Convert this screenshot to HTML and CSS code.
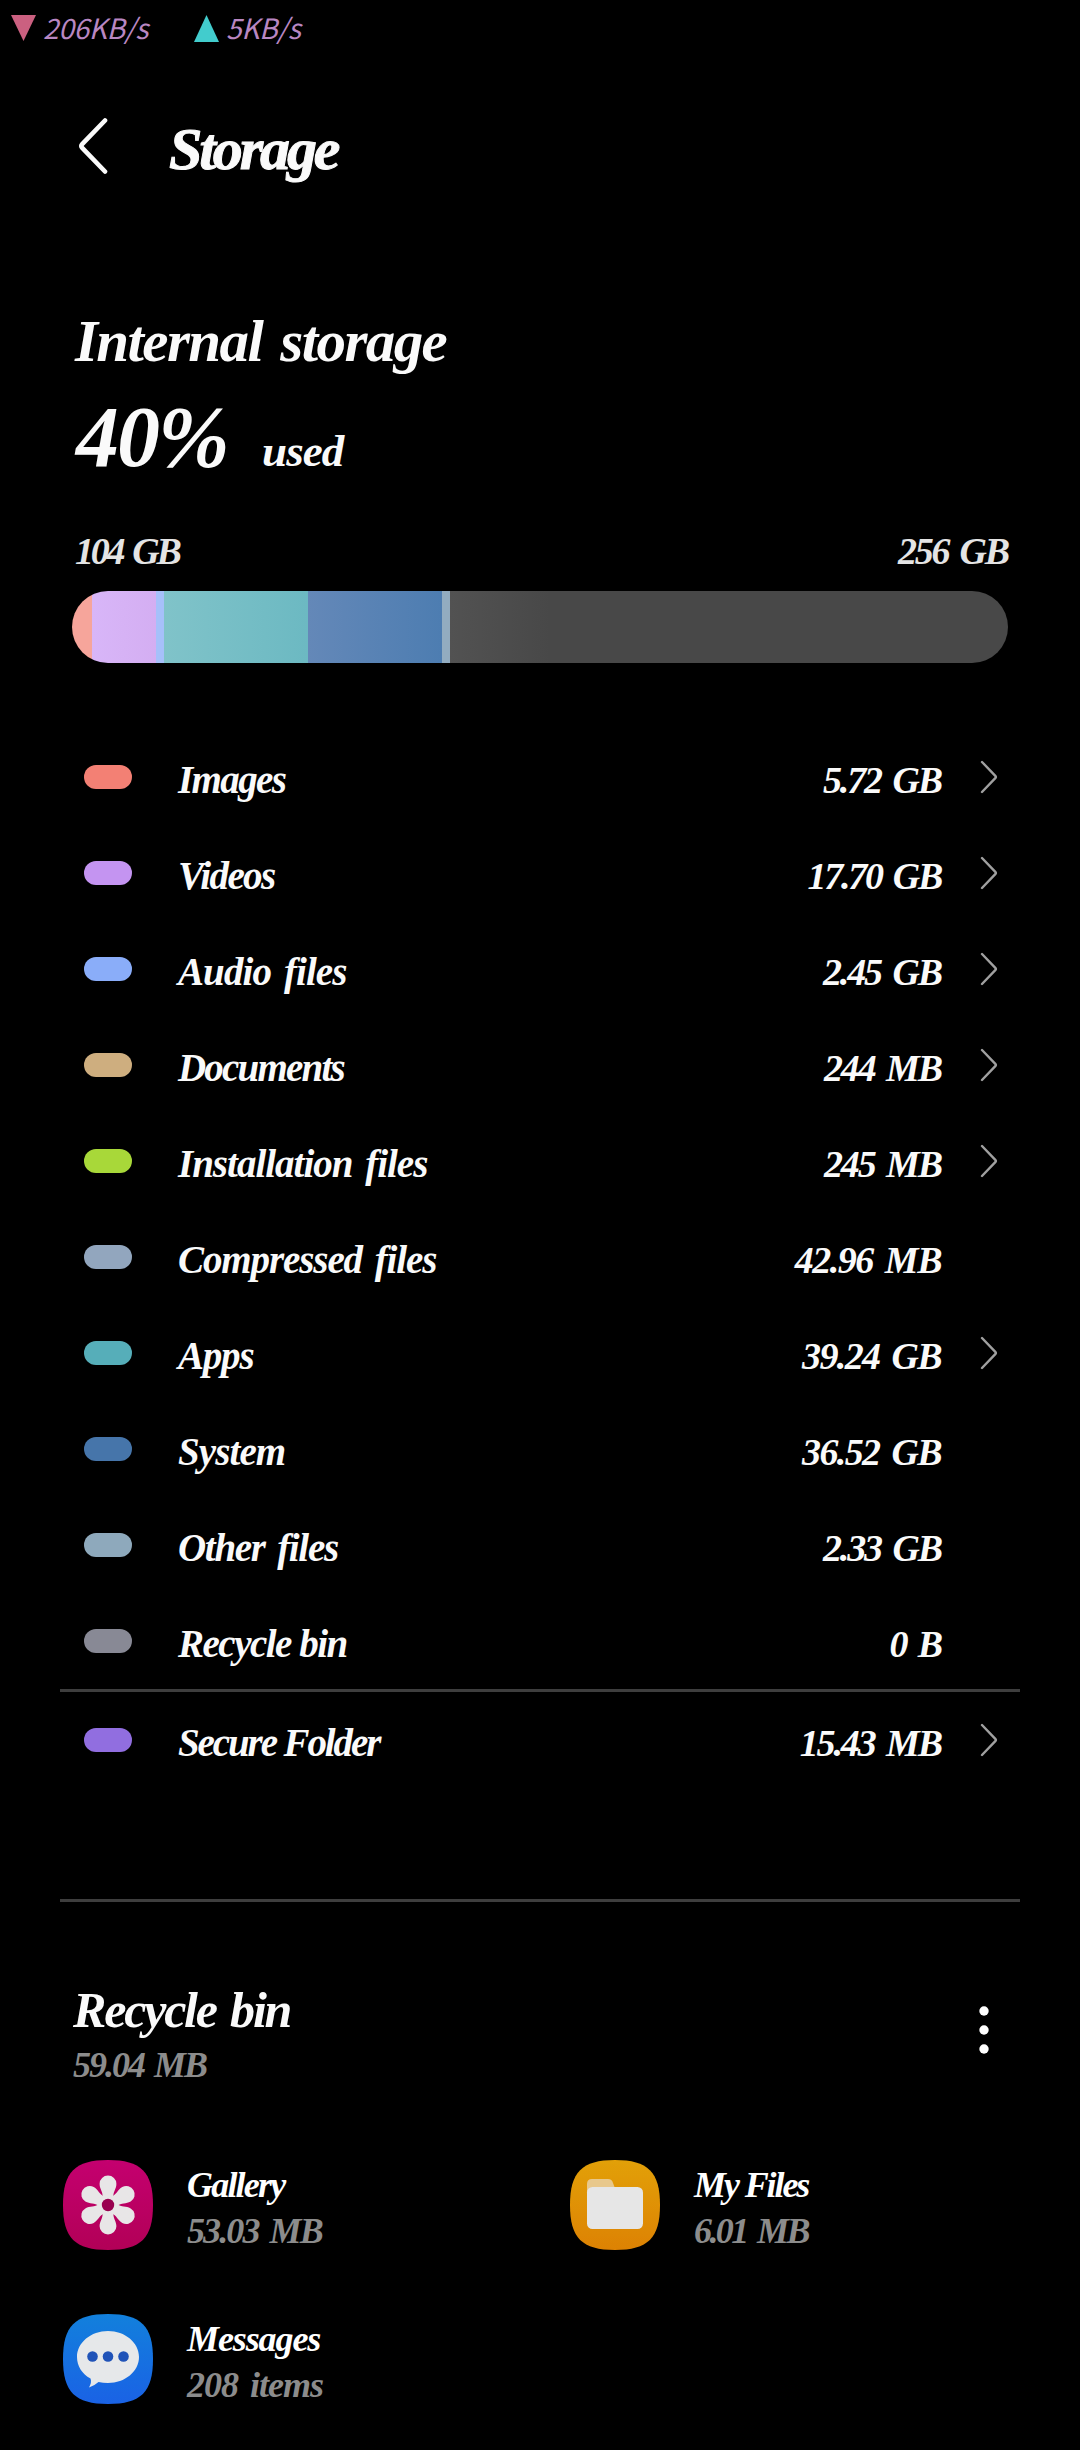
FILE: index.html
```html
<!DOCTYPE html>
<html lang="en">
<head>
<meta charset="utf-8">
<title>Storage</title>
<link rel="stylesheet" href="styles.css">
</head>
<body>
<div class="status">
  <svg class="tri" width="25" height="26" viewBox="0 0 25 26"><path d="M0 0h25L12.500 26z" fill="#cb6080"/></svg>
  <span class="speed speed--down">206KB/s</span>
  <svg class="tri" width="25" height="27" viewBox="0 0 25 27"><path d="M0 27h25L12.500 0z" fill="#42cccd"/></svg>
  <span class="speed speed--up">5KB/s</span>
</div>

<header class="header">
  <svg class="back" width="30" height="56" viewBox="0 0 30 56"><path d="M27 2.500L4.200 26.200Q2.500 28 4.200 29.800L27 53.500" fill="none" stroke="#fafafa" stroke-width="4.600" stroke-linecap="round"/></svg>
  <h1 class="title">Storage</h1>
</header>

<main>
  <section class="summary">
    <h2 class="heading">Internal storage</h2>
    <p class="usage"><span class="percent">40%</span><span class="used">used</span></p>
    <div class="scale"><span class="scale-used">104 GB</span><span class="scale-total">256 GB</span></div>
    <div class="bar">
      <i class="seg seg--images"></i><i class="seg seg--videos"></i><i class="seg seg--audio"></i><i class="seg seg--apps"></i><i class="seg seg--system"></i><i class="seg seg--other"></i><i class="seg seg--free"></i>
    </div>
  </section>

  <svg width="0" height="0" class="defs"><symbol id="chev" viewBox="0 0 18 34"><path d="M2 2L15.300 15.800Q16.400 17 15.300 18.200L2 32" fill="none" stroke="#a0a0a0" stroke-width="2.400" stroke-linecap="round"/></symbol></svg>

  <ul class="list">
    <li class="row images"><i class="pill"></i><span class="label">Images</span><span class="value">5.72 GB</span><svg class="chev"><use href="#chev"/></svg></li>
    <li class="row videos"><i class="pill"></i><span class="label">Videos</span><span class="value">17.70 GB</span><svg class="chev"><use href="#chev"/></svg></li>
    <li class="row audio"><i class="pill"></i><span class="label">Audio files</span><span class="value">2.45 GB</span><svg class="chev"><use href="#chev"/></svg></li>
    <li class="row documents"><i class="pill"></i><span class="label">Documents</span><span class="value">244 MB</span><svg class="chev"><use href="#chev"/></svg></li>
    <li class="row installation"><i class="pill"></i><span class="label">Installation files</span><span class="value">245 MB</span><svg class="chev"><use href="#chev"/></svg></li>
    <li class="row compressed"><i class="pill"></i><span class="label">Compressed files</span><span class="value">42.96 MB</span></li>
    <li class="row apps"><i class="pill"></i><span class="label">Apps</span><span class="value">39.24 GB</span><svg class="chev"><use href="#chev"/></svg></li>
    <li class="row system"><i class="pill"></i><span class="label">System</span><span class="value">36.52 GB</span></li>
    <li class="row other"><i class="pill"></i><span class="label">Other files</span><span class="value">2.33 GB</span></li>
    <li class="row recycle"><i class="pill"></i><span class="label">Recycle bin</span><span class="value">0 B</span></li>
  </ul>
  <ul class="list list--secure">
    <li class="row secure"><i class="pill"></i><span class="label">Secure Folder</span><span class="value">15.43 MB</span><svg class="chev"><use href="#chev"/></svg></li>
  </ul>

  <section class="bin">
    <div class="bin-head">
      <div>
        <h2 class="bin-title">Recycle bin</h2>
        <p class="bin-size">59.04 MB</p>
      </div>
      <svg class="more" width="12" height="50" viewBox="0 0 12 50" fill="#fff"><circle cx="6" cy="6" r="4.700"/><circle cx="6" cy="25" r="4.700"/><circle cx="6" cy="44" r="4.700"/></svg>
    </div>
    <div class="apps-grid">
      <article class="app">
        <svg width="90" height="90" viewBox="0 0 90 90">
          <defs><linearGradient id="pink" x2="0" y2="1"><stop stop-color="#c4006f"/><stop offset="1" stop-color="#b20057"/></linearGradient></defs>
          <path d="M45 0C78 0 90 12 90 45S78 90 45 90 0 78 0 45 12 0 45 0z" fill="url(#pink)"/>
          <g fill="#e8e6e7"><circle cx="45" cy="45" r="9.500"/><path id="petal" d="M39.500 38C40.500 32 36.500 29 36.600 23.700A8.400 8.200 0 0 1 53.400 23.700C53.500 29 49.500 32 50.500 38z"/><use href="#petal" transform="rotate(60 45 45)"/><use href="#petal" transform="rotate(120 45 45)"/><use href="#petal" transform="rotate(180 45 45)"/><use href="#petal" transform="rotate(240 45 45)"/><use href="#petal" transform="rotate(300 45 45)"/></g>
          <circle cx="45" cy="45" r="6.200" fill="#99004f"/>
        </svg>
        <div class="app-text"><h3 class="app-name gallery">Gallery</h3><p class="app-size">53.03 MB</p></div>
      </article>
      <article class="app">
        <svg width="90" height="90" viewBox="0 0 90 90">
          <defs><linearGradient id="amber" x2="0" y2="1"><stop stop-color="#e2a008"/><stop offset="1" stop-color="#dd8203"/></linearGradient></defs>
          <path d="M45 0C78 0 90 12 90 45S78 90 45 90 0 78 0 45 12 0 45 0z" fill="url(#amber)"/>
          <path d="M17 34V24Q17 19 22 19H38Q42 19 43 23L44.500 27 50 34z" fill="#e8c88c"/>
          <rect x="17" y="27" width="56" height="42" rx="5.500" fill="#e6e6e6"/>
        </svg>
        <div class="app-text"><h3 class="app-name files">My Files</h3><p class="app-size files-size">6.01 MB</p></div>
      </article>
      <article class="app">
        <svg width="90" height="90" viewBox="0 0 90 90">
          <defs><linearGradient id="blue" x2="0" y2="1"><stop stop-color="#1280dc"/><stop offset="1" stop-color="#1a62e5"/></linearGradient></defs>
          <path d="M45 0C78 0 90 12 90 45S78 90 45 90 0 78 0 45 12 0 45 0z" fill="url(#blue)"/>
          <path d="M45 17C62 17 76 28.500 76 43S62 69 45 69Q40 69 35.500 68Q31 72 26 73.500Q29 68 27.500 64.500C19 60 14 52 14 43C14 28.500 28 17 45 17z" fill="#e6e8ea"/>
          <g fill="#2053b8"><circle cx="29.500" cy="42.500" r="5.300"/><circle cx="45" cy="42.500" r="5.300"/><circle cx="60.500" cy="42.500" r="5.300"/></g>
        </svg>
        <div class="app-text"><h3 class="app-name messages">Messages</h3><p class="app-size messages-size">208 items</p></div>
      </article>
    </div>
  </section>
</main>
</body>
</html>
```
FILE: styles.css
```css
* { box-sizing: border-box; margin: 0; padding: 0; }
body {
  width: 1080px;
  min-height: 2450px;
  background: #000;
  color: #fafafa;
  font-family: "Liberation Serif", serif;
  font-style: italic;
  font-weight: 700;
  white-space: nowrap;
  overflow-x: hidden;
}
svg { display: block; flex: none; }
.defs { height: 0; }

.status { display: flex; align-items: center; height: 56px; padding-left: 11px; }
.speed {
  font: italic 400 28px/40px "Noto Sans CJK SC", "Noto Sans", sans-serif;
  color: #b987c2;
  padding: 0 0 2px 7px;
  letter-spacing: -0.3px;
}
.speed--down { width: 158px; }

.header { display: flex; align-items: center; height: 180px; padding-left: 78px; }
.title { margin-left: 61px; padding-top: 6px; font-size: 60px; line-height: 80px; letter-spacing: -3.1px; -webkit-text-stroke: 1px #fafafa; }

.summary { padding: 65px 72px 0; }
.heading { padding-left: 3px; font-size: 59px; line-height: 80px; letter-spacing: -1.6px; word-spacing: 5px; }
.usage { display: flex; align-items: baseline; margin-top: 6px; padding-left: 4px; line-height: 100px; height: 100px; }
.percent { width: 186px; font-size: 86px; letter-spacing: -2px; }
.used { font-size: 45px; letter-spacing: -0.9px; }
.scale { display: flex; justify-content: space-between; margin-top: 39px; padding-left: 3px; font-size: 38px; line-height: 50px; color: #e4e4e4; word-spacing: 4px; }
.scale-used { letter-spacing: -3.3px; }
.scale-total { letter-spacing: -2.2px; }

.bar { display: flex; height: 72px; margin-top: 15px; border-radius: 36px; overflow: hidden; }
.seg--images { width: 20px; background: #f6a59b; }
.seg--videos { width: 64px; background: linear-gradient(90deg, #d8b6f8, #d4aef2); }
.seg--audio { width: 8px; background: #a6c0fa; }
.seg--apps { width: 144px; background: linear-gradient(90deg, #80c3c9, #6cb9c2); }
.seg--system { width: 134px; background: linear-gradient(90deg, #6488b8, #4d7db1); }
.seg--other { width: 8px; background: #92acc0; }
.seg--free { flex: 1; background: linear-gradient(90deg, #525252, #484848 100px); }

.list { list-style: none; margin: 66px 60px 0; }
.list--secure { margin-top: 0; height: 213px; border-top: 3px solid #3e3e3e; border-bottom: 3px solid #3e3e3e; }
.row { display: grid; grid-template-columns: 94px 1fr auto 79px; align-items: center; height: 96px; padding-left: 24px; }
.pill { width: 48px; height: 24px; border-radius: 12px; }
.label, .value { padding-top: 6px; font-size: 39px; line-height: 50px; }
.value { font-size: 38px; letter-spacing: -2.1px; word-spacing: 4px; }
.chev { width: 18px; height: 34px; margin-left: 39px; }

.images .pill { background: #f38074; }
.videos .pill { background: #c494f1; }
.audio .pill { background: #8aadf9; }
.documents .pill { background: #ceae7f; }
.installation .pill { background: #a8d839; }
.compressed .pill { background: #92a6be; }
.apps .pill { background: #56aeb9; }
.system .pill { background: #4675aa; }
.other .pill { background: #8ea9bc; }
.recycle .pill { background: #888995; }
.secure .pill { background: #916ee0; }

.images .label { letter-spacing: -1.6px; }
.videos .label { letter-spacing: -1.6px; }
.audio .label { letter-spacing: -0.9px; word-spacing: 4px; }
.documents .label { letter-spacing: -1.8px; }
.installation .label { letter-spacing: -1px; word-spacing: 4px; }
.compressed .label { letter-spacing: -1.1px; word-spacing: 4px; }
.apps .label { letter-spacing: -1.2px; }
.system .label { letter-spacing: -0.9px; }
.other .label { letter-spacing: -1.3px; word-spacing: 4px; }
.recycle .label { letter-spacing: -1.5px; }
.secure .label { letter-spacing: -2.1px; }
.compressed .value { letter-spacing: -1.5px; }
.apps .value, .system .value { letter-spacing: -1.6px; }
.videos .value { letter-spacing: -2.3px; }

.bin { padding-top: 78px; }
.bin-head { display: flex; justify-content: space-between; height: 108px; padding: 0 90px 0 73px; }
.bin-title { font-size: 50px; line-height: 60px; letter-spacing: -2.2px; word-spacing: 4px; }
.bin-size { margin-top: 3px; font-size: 36px; line-height: 44px; letter-spacing: -2px; word-spacing: 3px; color: #8c8c8c; }
.more { margin-top: 25px; }

.apps-grid { display: grid; grid-template-columns: 507px 1fr; row-gap: 64px; padding: 72px 0 0 63px; }
.app { display: flex; height: 90px; gap: 34px; }
.app-text { padding-top: 2px; }
.app-name { font-size: 36px; line-height: 46px; color: #fff; }
.app-size { font-size: 36px; line-height: 46px; color: #8c8c8c; letter-spacing: -1.9px; word-spacing: 4px; }
.gallery, .files { letter-spacing: -1.8px; }
.files { letter-spacing: -2.1px; }
.messages { letter-spacing: -1.1px; }
.messages-size { letter-spacing: -1px; }
.files-size { letter-spacing: -2.6px; }
```
